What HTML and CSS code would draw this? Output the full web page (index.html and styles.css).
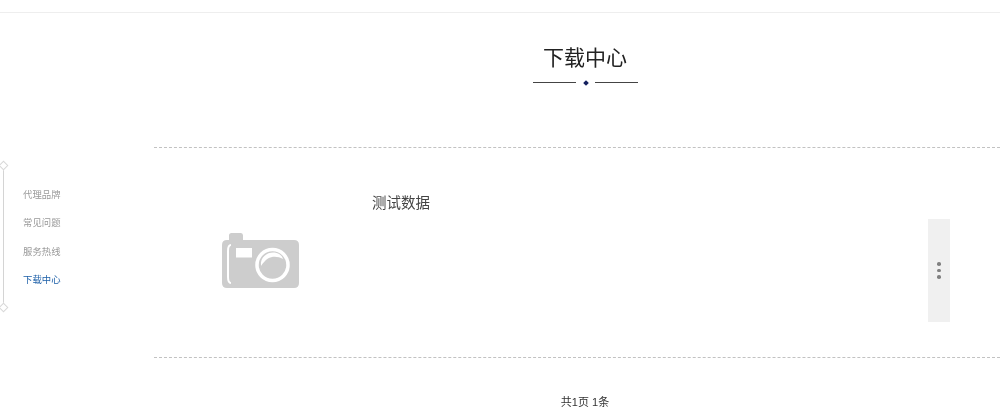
FILE: index.html
```html
<!DOCTYPE html>
<html lang="zh-CN">
<head>
    <meta charset="UTF-8">
    <meta name="viewport" content="width=device-width, initial-scale=1.0">
    <title>下载中心</title>
    <link rel="stylesheet" href="styles.css">
</head>
<body>
    <div class="top-bar"></div>
    <div class="page">
        <aside class="side">
            <span class="side-dot"></span>
            <ul class="side-nav">
                <li><a href="#">代理品牌</a></li>
                <li><a href="#">常见问题</a></li>
                <li><a href="#">服务热线</a></li>
                <li><a href="#" class="active">下载中心</a></li>
            </ul>
            <span class="side-dot"></span>
        </aside>
        <main class="content">
            <div class="heading">
                <h1>下载中心</h1>
                <div class="heading-line">
                    <span class="line"></span>
                    <span class="diamond"></span>
                    <span class="line"></span>
                </div>
            </div>
            <div class="list">
                <div class="item">
                    <div class="item-pic">
                        <svg width="77" height="55" viewBox="0 0 77 55">
                            <path fill="#cdcdcd" d="M7 7V2.500Q7 0 9.500 0H19Q21 0 21 2.500V7H72Q77 7 77 12V50Q77 55 72 55H5Q0 55 0 50V12Q0 7 5 7Z"/>
                            <path fill="none" stroke="#fff" stroke-width="2" d="M9 12Q6 12 6 18V44Q6 50 9 50"/>
                            <rect x="14" y="15" width="16" height="9.500" fill="#fff"/>
                            <circle cx="50.500" cy="32" r="15.500" fill="none" stroke="#fff" stroke-width="3.500"/>
                            <path fill="#fff" d="M39 33C38 24 45 19.500 51 19.500C56 19.500 60 22 61 26C56 23 50 23 46 25.500C43 27.500 41 30 39 33Z"/>
                        </svg>
                    </div>
                    <h3 class="item-title">测试数据</h3>
                    <div class="item-more">
                        <span></span>
                        <span></span>
                        <span></span>
                    </div>
                </div>
            </div>
            <div class="pager">共1页 1条</div>
        </main>
    </div>
</body>
</html>
```

FILE: styles.css
```css
* {
    box-sizing: border-box;
}
html, body {
    height: 100%;
}
body {
    margin: 0;
    background-color: #fff;
    font-family: "Liberation Sans", "Noto Sans CJK SC", sans-serif;
    overflow: hidden;
}
.top-bar {
    height: 13px;
    border-bottom: 1px solid #eee;
}
.page {
    display: flex;
    will-change: transform; /* grey text edges, no colour fringe */
}
.side {
    flex: 0 0 154px;
    margin-top: 148.500px;
    display: flex;
    flex-direction: column;
    align-items: flex-start;
    height: 149px;
    background: linear-gradient(#d4d4d4, #d4d4d4) 3px 0 / 1px 100% no-repeat;
}
.side-dot {
    width: 7px;
    height: 7px;
    background-color: #fff;
    border: 1px solid #d8d8d8;
    transform: rotate(45deg);
}
.side-nav {
    list-style: none;
    margin: 0;
    padding: 12.500px 0 0 23px;
    flex: 1;
}
.side-nav li {
    height: 28.400px;
    line-height: 28.400px;
}
.side-nav a {
    font-size: 9.400px;
    color: #999;
    text-decoration: none;
    display: block;
}
.side-nav a.active {
    color: #1c5fa8;
}
.content {
    flex: 1;
    min-width: 0;
}
.heading {
    padding: 31px 0 0 16px;
    text-align: center;
}
.heading h1 {
    margin: 0;
    font-size: 21px;
    line-height: 28px;
    font-weight: normal;
    color: #222;
}
.heading-line {
    display: flex;
    justify-content: center;
    align-items: center;
    gap: 7px;
    margin: 8px 0 0 1px;
    height: 5px;
}
.line {
    width: 43px;
    height: 1px;
    background-color: #444;
}
.diamond {
    width: 4px;
    height: 4px;
    margin-left: 1px;
    background-color: #14205e;
    transform: rotate(45deg);
}
.list {
    margin-top: 62px;
    border-top: 1px dashed #c2c2c2;
    border-bottom: 1px dashed #c2c2c2;
}
.item {
    display: grid;
    grid-template-columns: 218px 1fr 22px 50px;
    height: 209px;
}
.item-pic {
    grid-column: 1;
    padding: 85px 0 0 68px;
}
.item-title {
    grid-column: 2;
    margin: 45px 0 0;
    font-size: 14.500px;
    line-height: 20px;
    font-weight: normal;
    color: #444;
}
.item-more {
    grid-column: 3;
    margin-top: 71px;
    height: 103px;
    background-color: #f0f0f0;
    display: flex;
    flex-direction: column;
    justify-content: center;
    align-items: center;
    gap: 3px;
}
.item-more span {
    width: 3.500px;
    height: 3.500px;
    border-radius: 50%;
    background-color: #808080;
}
.pager {
    padding: 36px 0 0 16px;
    text-align: center;
    font-size: 11px;
    line-height: 16px;
    color: #333;
}
```
